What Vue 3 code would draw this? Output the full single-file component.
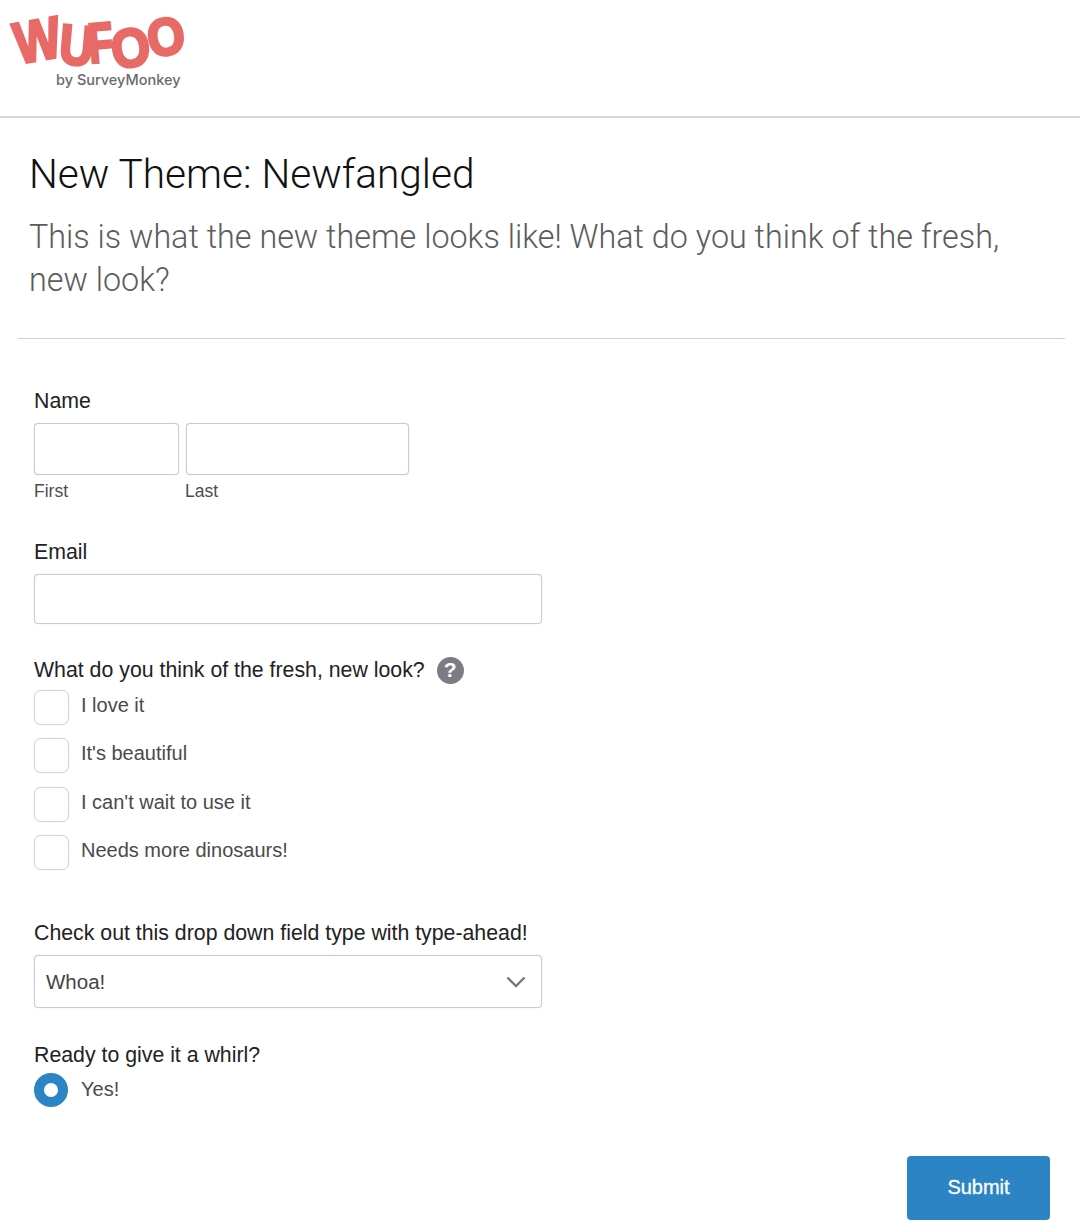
<!-- Formulario de ejemplo de Wufoo, tema Newfangled -->
<script setup>
const options = ['I love it', "It's beautiful", "I can't wait to use it", 'Needs more dinosaurs!']
// cada letra del logo va rotada y escalada a mano
const logoLetters = [
  { ch: 'W', x: 18, y: 64, rot: -10, sx: 0.85, size: 58 },
  { ch: 'U', x: 58, y: 63, rot: 5, sx: 0.85, size: 56 },
  { ch: 'F', x: 90, y: 63, rot: -5, sx: 0.72, size: 56 },
  { ch: 'O', x: 114, y: 69, rot: -8, sx: 0.92, size: 54 },
  { ch: 'O', x: 150, y: 57, rot: -8, sx: 0.92, size: 52 },
]
</script>

<template>
  <div class="page">
    <header class="top">
      <svg class="logo" width="200" height="100" viewBox="0 0 200 100">
        <text
          v-for="(l, i) in logoLetters"
          :key="i"
          class="logo-letter"
          :font-size="l.size"
          :transform="`translate(${l.x} ${l.y}) rotate(${l.rot}) scale(${l.sx} 1)`"
        >{{ l.ch }}</text>
        <text class="logo-by" x="56" y="85">by SurveyMonkey</text>
      </svg>
    </header>

    <section class="intro">
      <h1>New Theme: Newfangled</h1>
      <p>This is what the new theme looks like! What do you think of the fresh, new look?</p>
    </section>

    <form class="form" @submit.prevent>
      <div class="field name-field">
        <div class="label">Name</div>
        <div class="name-row">
          <div class="name-col first">
            <div class="input name-input"></div>
            <div class="sub">First</div>
          </div>
          <div class="name-col last">
            <div class="input name-input"></div>
            <div class="sub">Last</div>
          </div>
        </div>
      </div>

      <div class="field email-field">
        <div class="label">Email</div>
        <div class="input email-input"></div>
      </div>

      <div class="field check-field">
        <div class="label with-help">
          What do you think of the fresh, new look?
          <span class="help">?</span>
        </div>
        <div class="checks">
          <div v-for="o in options" :key="o" class="check-row">
            <span class="box"></span>
            <span class="opt">{{ o }}</span>
          </div>
        </div>
      </div>

      <div class="field select-field">
        <div class="label">Check out this drop down field type with type-ahead!</div>
        <div class="input select">
          <span>Whoa!</span>
          <svg width="20" height="12" viewBox="0 0 20 12">
            <path d="M1.5 1.5 L10 10 L18.5 1.5" fill="none" stroke="#77777f" stroke-width="2.4" />
          </svg>
        </div>
      </div>

      <div class="field radio-field">
        <div class="label">Ready to give it a whirl?</div>
        <div class="radio-row">
          <span class="radio"></span>
          <span class="opt yes">Yes!</span>
        </div>
      </div>

      <div class="actions">
        <button class="submit" type="submit">Submit</button>
      </div>
    </form>
  </div>
</template>

<style>
body { background: #fff; }
</style>

<style scoped>
.page {
  width: 1080px; height: 1232px;
  box-sizing: border-box;
  overflow: hidden;
  font-family: 'Liberation Sans', Arial, sans-serif;
  color: #222;
}

.top {
  height: 118px;
  box-sizing: border-box;
  border-bottom: 2px solid #d6d6df;
}
.logo { display: block; }
.logo-letter {
  font-family: 'Liberation Sans', Arial, sans-serif;
  font-weight: 700;
  fill: #e86a66;
  stroke: #e86a66;
  stroke-width: 3;
}
.logo-by {
  font-family: Inter, 'Liberation Sans', sans-serif;
  font-size: 14.5px; font-weight: 500;
  fill: #6a6a6e;
}

.intro {
  margin: 0 15px 0 18px;
  padding: 30px 40px 36px 11px;
  border-bottom: 1px solid #cfcfdc;
}
.intro h1 {
  margin: 0;
  font-family: Roboto, 'Liberation Sans', sans-serif;
  font-size: 40.6px; font-weight: 300; line-height: 52px;
  color: #111;
}
.intro p {
  margin: 16px 0 0;
  font-family: Roboto, 'Liberation Sans', sans-serif;
  font-size: 32.3px; font-weight: 300; line-height: 43px;
  color: #5c5c5c;
}

.form { padding: 47px 30px 0 34px; }
.field { width: 508px; }
.label { font-size: 21.3px; line-height: 30px; color: #222; }

.input {
  box-sizing: border-box;
  border: 1px solid #c9c9d8;
  box-shadow: 0 0 1px #c9c9d8;
  border-radius: 4px;
  background: #fff;
}

.name-row { display: flex; gap: 7px; margin-top: 7px; }
.name-col.first { width: 145px; }
.name-col.last { width: 223px; }
.name-input { height: 52px; }
.sub { margin-top: 6px; font-size: 17.5px; line-height: 21px; color: #4d4d4f; }
.name-col.last .sub { margin-left: -1px; }

.email-field { margin-top: 35px; }
.email-input { height: 50px; margin-top: 7px; }

.check-field { margin-top: 31px; }
.with-help { display: flex; align-items: center; gap: 12px; width: max-content; }
.help {
  width: 27px; height: 27px;
  border-radius: 50%;
  background: #7c7c84;
  color: #fff;
  font-size: 21px; font-weight: 700;
  display: flex; align-items: center; justify-content: center;
}
.checks { display: flex; flex-direction: column; gap: 13.3px; margin-top: 5px; }
.check-row { display: flex; gap: 12px; height: 35px; }
.box {
  width: 35px; height: 35px;
  box-sizing: border-box;
  border: 1px solid #d4d4d4;
  box-shadow: 0 0 1px #d4d4d4;
  border-radius: 7px;
}
.opt { font-size: 20px; line-height: 31px; color: #4a4a4c; }
.opt.yes { line-height: 32px; }

.select-field { margin-top: 48px; }
.select {
  height: 53px; margin-top: 7px;
  padding: 2px 15px 0 11px;
  display: flex; align-items: center; justify-content: space-between;
  font-size: 20.5px; color: #444;
}

.radio-field { margin-top: 32px; }
.radio-row { display: flex; gap: 13px; height: 34px; margin-top: 3px; }
.radio {
  width: 34px; height: 34px;
  box-sizing: border-box;
  border: 10.5px solid #2c84c4;
  border-radius: 50%;
  background: #fff;
}

.actions { display: flex; justify-content: flex-end; margin-top: 49px; }
.submit {
  width: 143px; height: 64px;
  border: 0; border-radius: 4px;
  background: #2c84c4;
  color: #fff;
  font-family: 'Liberation Sans', Arial, sans-serif;
  font-size: 20px;
  -webkit-text-stroke: 0.3px #fff;
}
</style>
